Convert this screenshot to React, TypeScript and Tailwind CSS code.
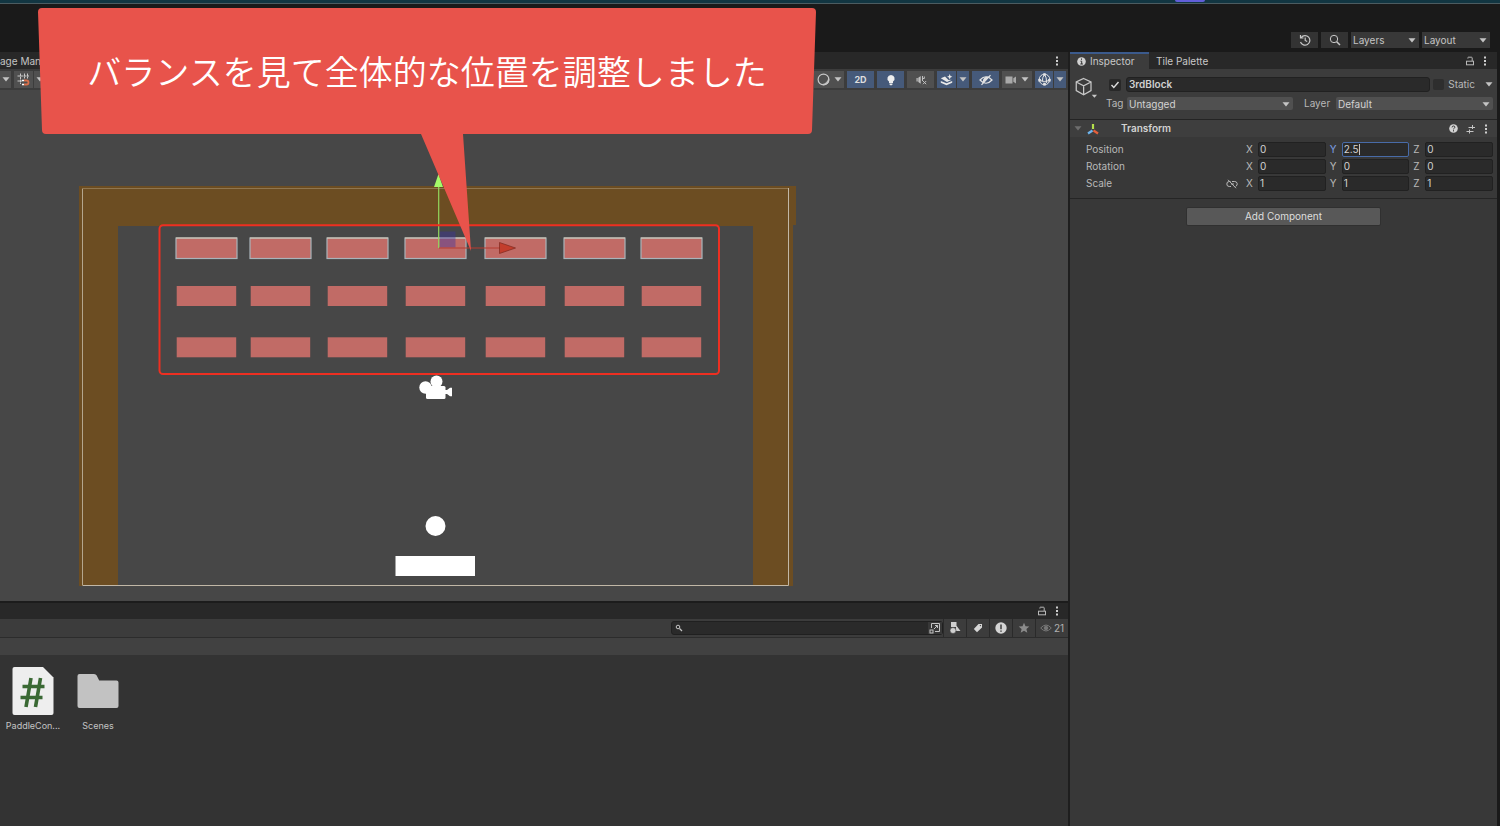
import type { ReactNode } from "react";

const COLUMNS = [176, 250, 327, 405, 485, 564, 641];

function Caret({ className = "text-[#c4c4c4]" }: { className?: string }) {
  return (
    <svg viewBox="0 0 8 5" className={`h-[5px] w-2 shrink-0 ${className}`} aria-hidden="true">
      <path d="M.5.3h7L4 4.5z" fill="currentColor" />
    </svg>
  );
}

function Dots() {
  return (
    <svg viewBox="0 0 4 10" className="h-2.5 w-1 fill-[#d0d0d0]" aria-hidden="true">
      <rect x="1" y="0.5" width="2" height="2" />
      <rect x="1" y="4" width="2" height="2" />
      <rect x="1" y="7.5" width="2" height="2" />
    </svg>
  );
}

function Lock() {
  return (
    <svg viewBox="0 0 10 10" className="h-2.5 w-2.5" fill="none" stroke="#b8b8b8" aria-hidden="true">
      <rect x="1.5" y="5.2" width="7" height="3.6" />
      <path d="M2.9 2.6V1.7q0-.5.5-.5h3q.8 0 .8.8v3" />
    </svg>
  );
}

function PanelMenu() {
  return (
    <div className="flex items-center gap-2">
      <button aria-label="Lock panel"><Lock /></button>
      <button aria-label="Panel menu"><Dots /></button>
    </div>
  );
}

function Tool({ label, tone, width, children }: { label: string; tone: string; width: string; children: ReactNode }) {
  return (
    <button aria-label={label} className={`flex h-[17px] shrink-0 items-center justify-center gap-1 ${tone} ${width}`}>
      {children}
    </button>
  );
}

const GRAY = "bg-[#505050]";
const BLUE = "bg-[#465a7a]";

function SceneToolbar() {
  return (
    <div className="flex h-[21px] items-center justify-between bg-[#3c3c3c] pr-0.5">
      <div className="flex gap-[3px]">
        <Tool label="Pivot options" tone={GRAY} width="w-[11px]"><Caret /></Tool>
        <div className="flex gap-px">
          <Tool label="Grid snapping" tone={GRAY} width="w-[19px]">
            <svg viewBox="0 0 13 13" className="h-[13px] w-[13px]" fill="none" aria-hidden="true">
              <path d="M3.500.5v10.500M7.500.5v5M10.500.5v5M.5 3h12M.5 8h4.500" stroke="#c8c8c8" strokeDasharray="2.500 .5" />
              <path d="M7 7.500h2.500a2 2 0 0 1 0 4H7" stroke="#d9704b" strokeWidth="1.800" />
              <path d="M5 7.500h2M5 11.500h2" stroke="#fff" strokeWidth="1.600" />
            </svg>
          </Tool>
          <Tool label="Snap options" tone={GRAY} width="w-3"><Caret /></Tool>
        </div>
      </div>
      <div className="flex gap-[3px]">
        <Tool label="Draw mode" tone={GRAY} width="w-[30px]">
          <svg viewBox="0 0 13 13" className="h-[13px] w-[13px]" aria-hidden="true">
            <path d="M10.8 3.200a5.200 5.200 0 1 1-7.800 7.400 6 6 0 0 0 7.800-7.400z" fill="#bdbdbd" />
            <circle cx="6.500" cy="6.500" r="5.400" fill="none" stroke="#c8c8c8" strokeWidth="1.200" />
          </svg>
          <Caret />
        </Tool>
        <Tool label="2D view" tone={BLUE} width="w-[27px]">
          <span className="text-[9px] font-bold text-[#dedede]">2D</span>
        </Tool>
        <Tool label="Scene lighting" tone={BLUE} width="w-[27px]">
          <svg viewBox="0 0 10 12" className="h-3 w-2.5" fill="#eee" aria-hidden="true">
            <path d="M5 1a3.600 3.600 0 0 0-2 6.600V9h4V7.600A3.600 3.600 0 0 0 5 1zM3.500 9.500h3v1l-.8.8H4.300l-.8-.8z" />
          </svg>
        </Tool>
        <Tool label="Scene audio" tone={GRAY} width="w-[27px]">
          <svg viewBox="0 0 12 10" className="h-2.5 w-3" fill="none" stroke="#c0c0c0" aria-hidden="true">
            <path d="M1.500 3v3.500h1.200V3zM3.300 2.800 5.700 1v7.800L3.300 7z" fill="#c0c0c0" stroke="none" />
            <path d="M7.500 1v5M7.500 3.500h1.800V1.500M8 6l3.200 3.200M11.200 6 8 9.200" />
          </svg>
        </Tool>
        <div className="flex gap-px">
          <Tool label="Effects" tone={BLUE} width="w-[19px]">
            <svg viewBox="0 0 13 12" className="h-3 w-[13px]" fill="#e8e8e8" aria-hidden="true">
              <path d="M.8 4.300 5 2.500l1.500 1.500L8.500 6l3.200-.3L7 8z" />
              <path d="M.8 7l5.700 2.200L12.200 7v1.700l-5.700 2.600L.8 8.700z" />
              <path d="M9.700 0l.8 1.900 1.900.8-1.900.8-.8 1.900-.8-1.900L7 2.700l1.900-.8z" />
            </svg>
          </Tool>
          <Tool label="Effects options" tone={BLUE} width="w-3"><Caret /></Tool>
        </div>
        <Tool label="Scene visibility" tone={BLUE} width="w-[27px]">
          <svg viewBox="0 0 14 12" className="h-3 w-3.5" fill="none" stroke="#e3e3e3" strokeWidth="1.200" aria-hidden="true">
            <path d="M1 6q6-6.500 12 0-6 6.500-12 0z" />
            <path d="M4.500 7.500q0-4 4-4.300z" fill="#e3e3e3" />
            <path d="M2.500 10.800l9-9.600" />
          </svg>
        </Tool>
        <Tool label="Camera settings" tone={GRAY} width="w-[30px]">
          <svg viewBox="0 0 12 10" className="h-2.5 w-3" fill="#a9a9a9" aria-hidden="true">
            <path d="M.5 1.500h7v7h-7zM8.300 3.300l2.700-1.800v7L8.300 6.700z" />
          </svg>
          <Caret />
        </Tool>
        <div className="flex gap-px">
          <Tool label="Gizmos" tone={BLUE} width="w-[18px]">
            <svg viewBox="0 0 13 13" className="h-[13px] w-[13px]" fill="none" stroke="#e3e3e3" aria-hidden="true">
              <circle cx="6.500" cy="6.500" r="5.300" />
              <path d="M6.500 1.500Q4.300 4 4.300 8.500M1.500 7.500q5 2 10 0M6.500 1.500q2.200 2.500 2.200 8.500" />
              <path d="M5.300.3h2.400v2.400H5.300zM.3 6h2.600v2.600H.3zM10.100 6h2.600v2.600h-2.600zM5.200 9.800h2.600v2.600H5.200z" fill="#e3e3e3" stroke="none" />
            </svg>
          </Tool>
          <Tool label="Gizmo options" tone={BLUE} width="w-3"><Caret /></Tool>
        </div>
      </div>
    </div>
  );
}

function SceneCanvas() {
  return (
    <div className="min-h-[320px] flex-1 basis-0 overflow-hidden bg-[#474747]">
      <svg width="820" height="511" viewBox="0 90 820 511" className="block" role="img" aria-label="Breakout level">
        <path d="M79 186h717v39h-3v361h-40V226H118v360H79z" fill="#6c4d22" />
        <path d="M82.500 585V188.500" stroke="#b4a68e" />
        <path d="M82 188.500h707" stroke="#8f7650" />
        <path d="M788.500 188v397.500H82.500" fill="none" stroke="#c1b7a6" />
        {COLUMNS.map((x) => (
          <g key={x} fill="#c16b66">
            <rect x={x} y="238" width="61" height="20.500" stroke="#a9b4ba" strokeWidth="1.200" />
            <path d={`M${x} 238h61`} stroke="#d6cbb7" />
            <rect x={x + 0.7} y="286" width="59.500" height="20" />
            <rect x={x + 0.7} y="337.300" width="59.500" height="20" />
          </g>
        ))}
        <rect x="439.500" y="231.500" width="16" height="16" fill="#3c32a0" fillOpacity=".42" />
        <path d="M438.700 187v61" stroke="#93d75c" strokeWidth="1.200" />
        <path d="M438.500 174l-4.500 13h9z" fill="#a4fa69" />
        <path d="M439 248h62" stroke="#b63c31" />
        <path d="M499.500 242.500l16 5.500-16 5.500z" fill="#c33d2c" stroke="#7c2a20" strokeWidth=".7" />
        <rect x="159.500" y="225.300" width="559.500" height="148.700" rx="3.500" fill="none" stroke="#ee2f21" strokeWidth="2" />
        <g fill="#fff">
          <circle cx="436.500" cy="381.500" r="6" />
          <circle cx="425.500" cy="387.500" r="6.200" />
          <rect x="426" y="386" width="19.500" height="13" rx="1.500" />
          <path d="M444 390h3l3-2.300h2v8.500h-2l-3-2.200h-3z" />
          <circle cx="435.500" cy="526" r="10" />
          <rect x="395.500" y="556" width="79.500" height="20" />
        </g>
      </svg>
    </div>
  );
}

function FilterButton({ label, children }: { label: string; children: ReactNode }) {
  return (
    <button aria-label={label} className="flex h-full w-[23px] items-center justify-center border-l border-[#2a2a2a]">
      {children}
    </button>
  );
}

function ProjectPanel() {
  return (
    <section className="flex h-[225px] shrink-0 flex-col border-t-2 border-[#1c1c1c] bg-[#333333]">
      <div className="flex h-4 items-center justify-end bg-[#282828] pr-[9px]">
        <PanelMenu />
      </div>
      <div className="flex h-[19px] items-center justify-end border-b border-[#2c2c2c] bg-[#3c3c3c]">
        <label className="flex h-3.5 w-[272px] items-center rounded-[3px] border border-[#202020] bg-[#2a2a2a] pl-[3px]">
          <svg viewBox="0 0 8 8" className="h-2 w-2" fill="none" stroke="#c4c4c4" aria-hidden="true">
            <circle cx="3" cy="3" r="1.800" />
            <path d="M4.500 4.500 7 7" strokeWidth="1.300" />
          </svg>
          <input type="search" aria-label="Search assets" className="min-w-0 flex-1 bg-transparent px-1 text-[10px] text-[#c4c4c4] outline-none" />
          <svg viewBox="0 0 14 12" className="h-3 w-3.5 bg-[#383838]" fill="none" stroke="#c4c4c4" aria-hidden="true">
            <path d="M3.500 6V1.500h8v8H7M6 7l3.500-3.500M7 3.500h2.500V6" />
            <rect x="2" y="8" width="3" height="3" />
          </svg>
        </label>
        <FilterButton label="Filter by type">
          <svg viewBox="0 0 12 12" className="h-3 w-3" fill="#d0d0d0" aria-hidden="true">
            <path d="M2 0h5.500v5H2zM7.300 3.500 11.500 9h-5z" />
            <circle cx="4" cy="8.500" r="3" stroke="#3c3c3c" strokeWidth=".6" />
          </svg>
        </FilterButton>
        <FilterButton label="Filter by label">
          <svg viewBox="0 0 10 10" className="h-2.5 w-2.5" aria-hidden="true">
            <path d="M5.500 1H9v3.500L4 9.300.8 6z" fill="#d6d6d6" />
            <circle cx="7.400" cy="2.600" r=".7" fill="#3c3c3c" />
          </svg>
        </FilterButton>
        <FilterButton label="Show import log">
          <svg viewBox="0 0 12 12" className="h-3 w-3" aria-hidden="true">
            <circle cx="6" cy="6" r="5.700" fill="#d6d6d6" />
            <path d="M6 2.500v4.700M6 8.500v1.300" stroke="#3c3c3c" strokeWidth="1.500" />
          </svg>
        </FilterButton>
        <FilterButton label="Save search">
          <svg viewBox="0 0 12 12" className="h-3 w-3" fill="#8b8b8b" aria-hidden="true">
            <path d="M6 .8l1.500 3.500 3.800.3-2.900 2.500.9 3.700L6 8.800l-3.300 2 .9-3.700L.7 4.600l3.800-.3z" />
          </svg>
        </FilterButton>
        <button className="flex h-full w-[33px] items-center justify-center gap-0.5 border-l border-[#2a2a2a] text-[10px] text-[#b0b0b0]">
          <svg viewBox="0 0 12 8" className="h-2 w-3" fill="none" stroke="#777" aria-hidden="true">
            <path d="M.7 4q5.300-6 10.600 0-5.300 6-10.600 0z" />
            <circle cx="6" cy="4" r="1.800" fill="#777" />
          </svg>
          21
        </button>
      </div>
      <div className="h-[17px] shrink-0 bg-[#414141]" />
      <ul className="flex pt-3 text-center text-[9px] leading-[13px] text-[#c4c4c4]">
        <li className="flex w-[66px] flex-col items-center gap-1">
          <svg viewBox="0 0 42 48" className="h-12 w-[42px]" aria-hidden="true">
            <path d="M2.500 0H31l10.500 10.500V46q0 2-2 2h-37q-2 0-2-2V2q0-2 2-2z" fill="#eeeeee" />
            <path d="M19 11l-5 29M28.500 11l-5 29M10.500 19.500h22M8.500 30.500h22" stroke="#3a6934" strokeWidth="3.600" />
          </svg>
          <span>PaddleCon...</span>
        </li>
        <li className="flex w-16 flex-col items-center gap-1">
          <svg viewBox="0 0 42 48" className="h-12 w-[42px]" aria-hidden="true">
            <path d="M2.500 7H17q2 0 2.700 1.500l2.500 5H39.500q2 0 2 2V39q0 2-2 2h-37q-2 0-2-2V9q0-2 2-2z" fill="#c2c2c2" />
          </svg>
          <span>Scenes</span>
        </li>
      </ul>
    </section>
  );
}

function Dropdown({ id, value, className }: { id: string; value: string; className: string }) {
  return (
    <div className={`grid items-center ${className}`}>
      <select id={id} aria-label={id} defaultValue={value} className="col-start-1 row-start-1 h-full w-full appearance-none bg-transparent pl-0.5 outline-none">
        <option>{value}</option>
      </select>
      <span className="pointer-events-none col-start-1 row-start-1 justify-self-end pr-[3px]"><Caret /></span>
    </div>
  );
}

function VectorRow({ label, values, focused }: { label: string; values: string[]; focused?: number }) {
  return (
    <div className="grid h-[15px] grid-cols-[156px_1fr_1fr_1fr] items-center gap-x-1">
      <div className="flex items-center justify-between pr-1">
        <span>{label}</span>
        {label === "Scale" && (
          <svg viewBox="0 0 12 10" className="h-2.5 w-3" fill="none" stroke="#b8b8b8" aria-hidden="true">
            <path d="M4.500 2.500H3.300a2.500 2.500 0 0 0 0 5H5M6 2.500h2.700a2.500 2.500 0 0 1 1 4.800M5 5h3M2 .8l8 8.400" />
          </svg>
        )}
      </div>
      {values.map((value, i) => (
        <label key={i} className="flex items-center">
          <span className={`w-3 shrink-0 ${focused === i ? "text-[#7d9fe0]" : ""}`}>{"XYZ"[i]}</span>
          <span className={`flex h-[15px] min-w-0 flex-1 items-center rounded-[2px] border bg-[#2a2a2a] pl-px text-[#d2d2d2] ${focused === i ? "border-[#486ba8]" : "border-[#212121]"}`}>
            <input
              aria-label={`${label} ${"XYZ"[i]}`}
              defaultValue={value}
              className={`bg-transparent outline-none ${focused === i ? "w-[15px]" : "w-full"}`}
            />
            {focused === i && <span className="h-[11px] w-px bg-[#c4c4c4]" />}
          </span>
        </label>
      ))}
    </div>
  );
}

function Inspector() {
  return (
    <aside className="flex w-[429px] shrink-0 flex-col border-l-2 border-[#1e1e1e] bg-[#383838] text-[10px] text-[#b8b8b8]">
      <div className="flex h-[17px] items-center bg-[#282828] pr-[10px]">
        <button className="flex h-full w-[79px] items-center gap-1 border-t-2 border-[#3b5a8c] bg-[#3c3c3c] pl-[7px] text-[#c8c8c8]">
          <svg viewBox="0 0 9 9" className="h-[9px] w-[9px]" aria-hidden="true">
            <circle cx="4.500" cy="4.500" r="4.300" fill="#d2d2d2" />
            <path d="M4.500 1.500v1.300M3.500 4.200h1.200v2.800M3.300 7h2.600" stroke="#333" fill="none" />
          </svg>
          Inspector
        </button>
        <button className="mr-auto pt-px pl-[7px] text-[#c8c8c8]">Tile Palette</button>
        <PanelMenu />
      </div>

      <header className="flex h-[50px] gap-2 bg-[#3c3c3c] pt-2 pr-1 pl-[5px]">
        <button aria-label="Object icon" className="flex w-[23px] shrink-0 items-start">
          <svg viewBox="0 0 24 24" className="h-6 w-6" fill="none" stroke="#c8c8c8" strokeWidth="1.300" aria-hidden="true">
            <path d="M9 1l7.700 3.700v9L9 18l-7.700-4.300v-9zM1.300 4.700l7.700 4 7.700-4M9 8.700V18" />
            <path d="M17.500 18H23l-2.700 3z" fill="#c8c8c8" stroke="none" />
          </svg>
        </button>
        <div className="flex min-w-0 flex-1 flex-col gap-[5px]">
          <div className="flex h-[15px] items-center pl-[3px]">
            <label className="grid h-3 w-3 place-items-center rounded-[2px] bg-[#282828]">
              <input type="checkbox" defaultChecked aria-label="Active" className="peer col-start-1 row-start-1 h-3 w-3 appearance-none" />
              <svg viewBox="0 0 10 10" className="pointer-events-none invisible col-start-1 row-start-1 h-2.5 w-2.5 peer-checked:visible" fill="none" stroke="#dcdcdc" strokeWidth="1.400" aria-hidden="true">
                <path d="M1.500 5l2.300 2.500L8.500 2" />
              </svg>
            </label>
            <input aria-label="Object name" defaultValue="3rdBlock" className="ml-[5px] h-[15px] min-w-0 flex-1 rounded-[3px] border border-[#212121] bg-[#2a2a2a] px-0.5 font-semibold text-[#d0d0d0] outline-none" />
            <label className="ml-[3px] flex items-center gap-1">
              <input type="checkbox" className="h-[11px] w-[11px] appearance-none rounded-[2px] bg-[#2e2e2e]" />
              Static
            </label>
            <button aria-label="Static options" className="ml-[10px]"><Caret /></button>
          </div>
          <div className="flex h-[13px] items-center">
            <label htmlFor="Tag" className="w-[21px] shrink-0">Tag</label>
            <Dropdown id="Tag" value="Untagged" className="h-[13px] flex-1 rounded-[2px] bg-[#505050] text-[#d2d2d2]" />
            <label htmlFor="Layer" className="ml-[11px] w-8 shrink-0">Layer</label>
            <Dropdown id="Layer" value="Default" className="h-[13px] w-[157px] rounded-[2px] bg-[#505050] text-[#d2d2d2]" />
          </div>
        </div>
      </header>

      <div className="flex h-[18px] items-center border-t border-[#242424] bg-[#3e3e3e] pr-[9px] pl-1">
        <Caret className="text-[#6e6e6e]" />
        <svg viewBox="0 0 12 12" className="ml-[5px] h-3 w-3" fill="none" strokeWidth="2.200" aria-hidden="true">
          <path d="M6 6V1" stroke="#b5e04c" />
          <path d="M5.500 7.500 1 10.500" stroke="#6db5ee" />
          <path d="M6.500 7.500 11 10.500" stroke="#e5603c" />
        </svg>
        <h2 className="mr-auto ml-[22px] font-semibold text-[#d2d2d2]">Transform</h2>
        <div className="flex items-center gap-2">
          <button aria-label="Help">
            <svg viewBox="0 0 9 9" className="h-[9px] w-[9px]" aria-hidden="true">
              <circle cx="4.500" cy="4.500" r="4.300" fill="#d2d2d2" />
              <path d="M3.100 3.400q0-1.400 1.400-1.400t1.400 1.200q0 .7-.8 1.100-.6.300-.6 1M4.500 6.200v1.200" stroke="#333" fill="none" />
            </svg>
          </button>
          <button aria-label="Presets">
            <svg viewBox="0 0 10 10" className="h-2.5 w-2.5" stroke="#c4c4c4" fill="none" aria-hidden="true">
              <path d="M2.500 3.500H9M6.500 1v4M.5 7.500h7M3.500 5.500v4" />
            </svg>
          </button>
          <button aria-label="Component menu"><Dots /></button>
        </div>
      </div>

      <div className="flex flex-col gap-0.5 border-b border-[#252525] pt-[5px] pr-1 pb-[7px] pl-4">
        <VectorRow label="Position" values={["0", "2.5", "0"]} focused={1} />
        <VectorRow label="Rotation" values={["0", "0", "0"]} />
        <VectorRow label="Scale" values={["1", "1", "1"]} />
      </div>

      <button className="mt-2 h-[19px] w-[195px] self-center rounded-[2px] border border-[#303030] bg-[#585858] text-[#dedede]">
        Add Component
      </button>
    </aside>
  );
}

function Callout() {
  return (
    <div className="pointer-events-none absolute top-2 left-[38px] grid w-[778px]">
      <svg viewBox="0 0 778 244" className="col-start-1 row-start-1 w-full" aria-hidden="true">
        <path d="M4 0H774q4 0 4 4l-4 118q0 4-4 4H425l8 117L383 126H8q-4 0-4-4L0 4q0-4 4-4z" fill="#e8534b" />
      </svg>
      <p className="col-start-1 row-start-1 pt-9 text-center font-['Noto_Sans_CJK_JP',sans-serif] text-[34px] leading-[54px] font-[350] whitespace-nowrap text-white">
        バランスを見て全体的な位置を調整しました
      </p>
    </div>
  );
}

export default function App() {
  return (
    <div className="relative flex min-h-screen flex-col overflow-hidden bg-[#1a1a1a] font-['Inter',sans-serif] text-[10px] text-[#c4c4c4]">
      <div className="flex h-1 shrink-0 items-start justify-end border-b border-[#4c5c61] bg-[#123642] pr-[295px]">
        <div className="h-0.5 w-[30px] rounded-b-sm bg-[#615fd9]" />
      </div>
      <header className="flex h-12 shrink-0 items-end justify-end gap-[3px] bg-[#1a1a1a] pr-[10px] pb-1">
        <button aria-label="Undo history" className="grid h-4 w-[27px] place-items-center bg-[#333333]">
          <svg viewBox="0 0 12 12" className="h-3 w-3" fill="none" stroke="#c8c8c8" strokeWidth="1.200" aria-hidden="true">
            <path d="M2.200 3.500A4.800 4.800 0 1 1 1.500 8M1.500 1v3h3M6.200 3.500V6.500l2 1" />
          </svg>
        </button>
        <button aria-label="Search" className="grid h-4 w-[27px] place-items-center bg-[#333333]">
          <svg viewBox="0 0 12 12" className="h-3 w-3" fill="none" stroke="#c8c8c8" aria-hidden="true">
            <circle cx="5" cy="5" r="3.700" />
            <path d="M7.700 7.700 11 11" strokeWidth="1.500" />
          </svg>
        </button>
        <Dropdown id="Layers" value="Layers" className="h-4 w-[68px] bg-[#383838]" />
        <Dropdown id="Layout" value="Layout" className="h-4 w-[68px] bg-[#383838]" />
      </header>
      <div className="flex min-h-0 flex-1 pr-[3px]">
        <main className="flex min-w-0 flex-1 flex-col">
          <div className="flex h-[17px] shrink-0 items-center justify-between bg-[#282828] pt-px pr-[9px]">
            <span>age Manager</span>
            <button aria-label="Scene menu"><Dots /></button>
          </div>
          <SceneToolbar />
          <SceneCanvas />
          <ProjectPanel />
        </main>
        <Inspector />
      </div>
      <Callout />
    </div>
  );
}
